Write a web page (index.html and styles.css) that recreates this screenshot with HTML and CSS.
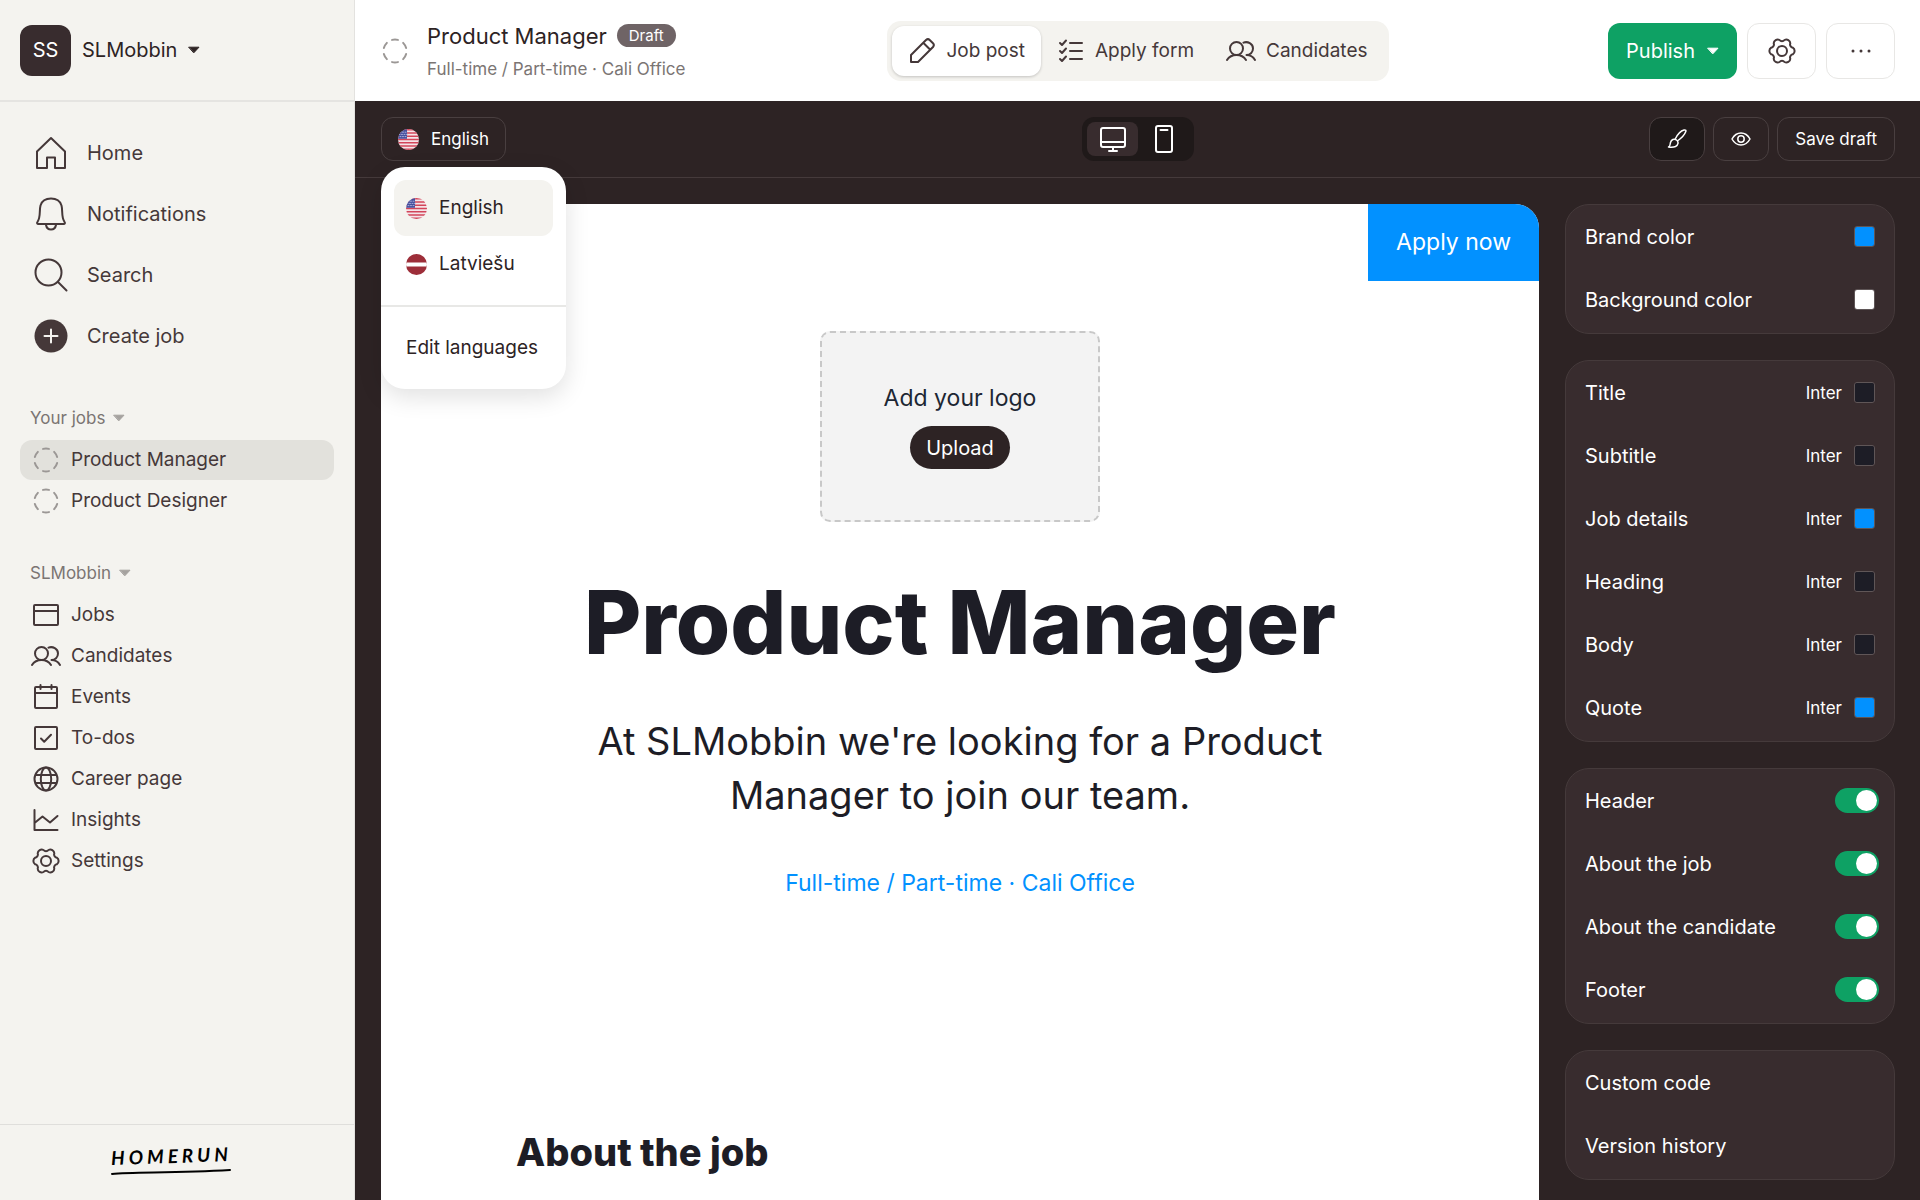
FILE: index.html
```html
<!DOCTYPE html>
<html lang="en">
  <head>
    <meta charset="UTF-8" />
    <meta name="viewport" content="width=device-width, initial-scale=1.0" />
    <title>Product Manager - Homerun</title>
    <link rel="stylesheet" href="styles.css">
  </head>
  <body>
    <!-- shared icons -->
    <svg class="sprite" aria-hidden="true">
      <symbol id="draft" viewBox="0 0 26 26">
        <circle cx="13" cy="13" r="11.5" pathLength="60" stroke-dasharray="5 5" stroke-dashoffset="-2.5" />
      </symbol>
      <symbol id="caret" viewBox="0 0 12 8">
        <path d="M1 1.2h10L6 6.6z" fill="currentColor" stroke-width="1" />
      </symbol>
      <symbol id="people" viewBox="0 0 30 20">
        <circle cx="10.5" cy="7.5" r="6.5" />
        <path d="M1 19c2.2-3.5 5.5-5 9.5-5s7.3 1.5 9.5 5M17.5 1.6c4.2-1.5 9.5 1 9.5 5.9 0 3.9-3 6.5-6.5 6.5 3.5 0 6.5 1.5 8.5 5" />
      </symbol>
      <symbol id="gear" viewBox="0 0 28 28">
        <path d="M24.8 10.7A3.9 3.9 0 0 1 24.8 17.3A3.2 3.2 0 0 0 22.3 21.7A3.9 3.9 0 0 1 16.5 25A3.2 3.2 0 0 0 11.5 25A3.9 3.9 0 0 1 5.7 21.7A3.2 3.2 0 0 0 3.2 17.3A3.9 3.9 0 0 1 3.2 10.7A3.2 3.2 0 0 0 5.7 6.3A3.9 3.9 0 0 1 11.5 3A3.2 3.2 0 0 0 16.5 3A3.9 3.9 0 0 1 22.3 6.3A3.2 3.2 0 0 0 24.8 10.7z" />
        <circle cx="14" cy="14" r="5" />
      </symbol>
      <symbol id="flag-us" viewBox="0 0 21 21">
        <clipPath id="round"><circle cx="10.5" cy="10.5" r="10.5" /></clipPath>
        <g clip-path="url(#round)" stroke="none">
          <path fill="#f4e4e8" d="M0 0h21v21H0z" />
          <path fill="#d2455a" d="M0 0h21v1.6H0zM0 3.2h21v1.6H0zM0 6.5h21v1.6H0zM0 9.7h21v1.6H0zM0 12.9h21v1.6H0zM0 16.2h21v1.6H0zM0 19.4h21v1.6H0z" />
          <path fill="#464f9e" d="M0 0h9v9.7H0z" />
          <path stroke="#a9aed6" stroke-width="1" stroke-dasharray="1 1.5" d="M2 3.2h7M1 5.4h8M2 7.6h7" />
        </g>
      </symbol>
      <symbol id="flag-lv" viewBox="0 0 21 21">
        <g clip-path="url(#round)" stroke="none">
          <path fill="#9d2e39" d="M0 0h21v21H0z" />
          <path fill="#fff" d="M0 8.4h21v4.2H0z" />
        </g>
      </symbol>
    </svg>

    <div class="app">
      <aside class="sidebar">
        <button class="account">
          <span class="avatar">SS</span>
          <span>SLMobbin</span>
          <svg class="icon caret"><use href="#caret" /></svg>
        </button>

        <nav class="main-nav">
          <a href="#">
            <svg class="icon icon-lg" viewBox="0 0 34 34"><path d="M3 32V15.500L17 2l14 13.500V32H21V21.500h-8V32z" /></svg>
            Home
          </a>
          <a href="#">
            <svg class="icon icon-lg" viewBox="0 0 34 34"><path d="M4.500 27c-1.500 0-1.800-1.200-1-2.200C7 20 5 14 6.500 8.500 8 3.500 12 1.500 17 1.500s9 2 10.500 7C29 14 27 20 30.500 24.800c.8 1 .5 2.200-1 2.200zM12 28c.5 2.700 2.500 4.500 5 4.500s4.500-1.800 5-4.500" /></svg>
            Notifications
          </a>
          <a href="#">
            <svg class="icon icon-lg" viewBox="0 0 34 34"><circle cx="14.500" cy="14.500" r="13" /><path d="M24 24l8.500 8.500" /></svg>
            Search
          </a>
          <a href="#">
            <svg class="icon icon-lg" viewBox="0 0 34 34"><circle cx="17" cy="17" r="16.500" fill="#453839" stroke="none" /><path d="M17 10.500v13M10.500 17h13" stroke="#f4f3ef" /></svg>
            Create job
          </a>
        </nav>

        <nav class="side-group">
          <button class="group-title">Your jobs <svg class="icon caret"><use href="#caret" /></svg></button>
          <a class="active" href="#"><svg class="icon draft"><use href="#draft" /></svg>Product Manager</a>
          <a href="#"><svg class="icon draft"><use href="#draft" /></svg>Product Designer</a>
        </nav>

        <nav class="side-group">
          <button class="group-title">SLMobbin <svg class="icon caret"><use href="#caret" /></svg></button>
          <a href="#"><svg class="icon" viewBox="0 0 28 28"><rect x="2" y="4" width="24" height="20" rx="1" /><path d="M2 10h24" /></svg>Jobs</a>
          <a href="#"><svg class="icon people"><use href="#people" /></svg>Candidates</a>
          <a href="#"><svg class="icon" viewBox="0 0 28 28"><rect x="3" y="4" width="22" height="21" rx="1" /><path d="M3 10h22M8.500 2v4M19.500 2v4" /></svg>Events</a>
          <a href="#"><svg class="icon" viewBox="0 0 28 28"><rect x="3" y="3" width="22" height="22" rx="1" /><path d="M9 14.500l3.200 3.200 6.800-7" /></svg>To-dos</a>
          <a href="#"><svg class="icon" viewBox="0 0 28 28"><circle cx="14" cy="14" r="11.500" /><ellipse cx="14" cy="14" rx="5.200" ry="11.500" /><path d="M4 10h20M4 18h20" /></svg>Career page</a>
          <a href="#"><svg class="icon" viewBox="0 0 28 28"><path d="M2.500 4v20h23M2.500 17l8-6.500 7.500 6 7.500-6.500" /></svg>Insights</a>
          <a href="#"><svg class="icon"><use href="#gear" /></svg>Settings</a>
        </nav>

        <div class="brand">
          <span class="brand-name">HOMERUN</span>
          <svg class="brand-line" viewBox="0 0 120 6"><path d="M1 5c20-2.500 60-.5 118-4" /></svg>
        </div>
      </aside>

      <div class="content">
        <header class="header">
          <div class="job">
            <svg class="icon draft"><use href="#draft" /></svg>
            <div>
              <div class="job-name">Product Manager <span class="badge">Draft</span></div>
              <div class="job-info">Full-time / Part-time · Cali Office</div>
            </div>
          </div>

          <nav class="tabs">
            <a class="active" href="#">
              <svg class="icon" viewBox="0 0 28 28"><path d="M3 25v-7L18 3c1.400-1.200 2.500-1.200 3.700 0L25 6.300c1.200 1.200 1.200 2.300 0 3.700L10 25zM15.500 6l6.500 6.500" /></svg>
              Job post
            </a>
            <a href="#">
              <svg class="icon" viewBox="0 0 28 28"><path d="M13 6h12M13 14h12M13 22h12M3 6l2 2 4-4.500M3 14l2 2 4-4.500M3 22l2 2 4-4.500" /></svg>
              Apply form
            </a>
            <a href="#"><svg class="icon people"><use href="#people" /></svg>Candidates</a>
          </nav>

          <div class="actions">
            <button class="publish">Publish <svg class="icon caret"><use href="#caret" /></svg></button>
            <button class="square" aria-label="Settings"><svg class="icon"><use href="#gear" /></svg></button>
            <button class="square" aria-label="More">
              <svg class="icon" viewBox="0 0 28 28"><g fill="currentColor" stroke="none"><circle cx="6" cy="14" r="1.500" /><circle cx="14" cy="14" r="1.500" /><circle cx="22" cy="14" r="1.500" /></g></svg>
            </button>
          </div>
        </header>

        <div class="toolbar">
          <div class="language">
            <button class="tool"><svg class="flag"><use href="#flag-us" /></svg>English</button>
            <div class="menu">
              <div class="menu-group">
                <button class="active"><svg class="flag"><use href="#flag-us" /></svg>English</button>
                <button><svg class="flag"><use href="#flag-lv" /></svg>Latviešu</button>
              </div>
              <div class="menu-group">
                <button>Edit languages</button>
              </div>
            </div>
          </div>

          <div class="devices">
            <button class="active" aria-label="Desktop">
              <svg class="icon" viewBox="0 0 28 28"><rect x="2" y="3" width="24" height="19" rx="2" /><path d="M2 17h24M14 22v4M10 26h8" /></svg>
            </button>
            <button aria-label="Mobile">
              <svg class="icon" viewBox="0 0 28 28"><rect x="6" y="1" width="16" height="26" rx="2" /><path d="M10.500 5h7" /></svg>
            </button>
          </div>

          <div class="tools">
            <button class="tool dark" aria-label="Design">
              <svg class="icon-sm" viewBox="0 0 20 20"><path d="M8.500 9.500c2-4 5-7.500 8.500-8.500 1.800-.4 2.200.6 1.700 1.800C17.500 6 14.500 9 11 11.500M1.500 18c1.800-.5 1.500-2.500 2-4.500.8-3 3.500-4.300 6-2.500 2.500 2 1.800 5-1 6.500-2 .9-4.500.8-7 .5z" /></svg>
            </button>
            <button class="tool" aria-label="Preview">
              <svg class="icon-sm" viewBox="0 0 20 20"><path d="M1 10c2.200-4 5.300-6 9-6s6.800 2 9 6c-2.200 4-5.300 6-9 6s-6.800-2-9-6z" /><circle cx="10" cy="10" r="3.200" /></svg>
            </button>
            <button class="tool">Save draft</button>
          </div>
        </div>

        <div class="workspace">
          <main class="page">
            <button class="apply">Apply now</button>
            <div class="logo-box">
              <span>Add your logo</span>
              <button class="upload">Upload</button>
            </div>
            <h1>Product Manager</h1>
            <p class="subtitle">At SLMobbin we're looking for a Product Manager to join our team.</p>
            <p class="details">Full-time / Part-time · Cali Office</p>
            <h2>About the job</h2>
          </main>

          <aside class="panel">
            <div class="card">
              <div class="row"><label for="brand">Brand color</label><input type="color" id="brand" value="#0291ff" /></div>
              <div class="row"><label for="background">Background color</label><input type="color" id="background" value="#ffffff" /></div>
            </div>
            <div class="card">
              <div class="row"><label for="title">Title</label><button class="font">Inter</button><input type="color" id="title" value="#1d1d26" /></div>
              <div class="row"><label for="subtitle">Subtitle</label><button class="font">Inter</button><input type="color" id="subtitle" value="#1d1d26" /></div>
              <div class="row"><label for="details">Job details</label><button class="font">Inter</button><input type="color" id="details" value="#0291ff" /></div>
              <div class="row"><label for="heading">Heading</label><button class="font">Inter</button><input type="color" id="heading" value="#1d1d26" /></div>
              <div class="row"><label for="body">Body</label><button class="font">Inter</button><input type="color" id="body" value="#1d1d26" /></div>
              <div class="row"><label for="quote">Quote</label><button class="font">Inter</button><input type="color" id="quote" value="#0291ff" /></div>
            </div>
            <div class="card">
              <div class="row"><label for="show-header">Header</label><input type="checkbox" id="show-header" checked /></div>
              <div class="row"><label for="show-job">About the job</label><input type="checkbox" id="show-job" checked /></div>
              <div class="row"><label for="show-candidate">About the candidate</label><input type="checkbox" id="show-candidate" checked /></div>
              <div class="row"><label for="show-footer">Footer</label><input type="checkbox" id="show-footer" checked /></div>
            </div>
            <div class="card">
              <button class="row">Custom code</button>
              <button class="row">Version history</button>
            </div>
          </aside>
        </div>
      </div>
    </div>
  </body>
</html>
```

FILE: styles.css
```css
* {
  box-sizing: border-box;
}
body {
  margin: 0;
  font-family: Inter, "Liberation Sans", sans-serif;
  font-size: 20px;
  line-height: 28px;
  color: #453839;
}
a {
  color: inherit;
  text-decoration: none;
}
button {
  padding: 0;
  border: none;
  background: none;
  font: inherit;
  color: inherit;
  cursor: pointer;
}
h1,
h2,
p {
  margin: 0;
}
.sprite {
  position: absolute;
  width: 0;
  height: 0;
}

/* icons */
svg {
  flex-shrink: 0;
  fill: none;
  stroke: currentColor;
  stroke-linecap: round;
  stroke-linejoin: round;
}
.icon {
  width: 28px;
  height: 28px;
  stroke-width: 2;
}
.icon-lg {
  width: 34px;
  height: 34px;
}
.icon-sm {
  width: 20px;
  height: 20px;
  stroke-width: 1.5;
}
.icon.draft {
  width: 26px;
  height: 26px;
  margin: 0 1px;
  color: #9b9795;
}
.icon.people {
  width: 30px;
  height: 20px;
}
.icon.caret {
  width: 12px;
  height: 8px;
}
.flag {
  width: 21px;
  height: 21px;
}

.app {
  display: flex;
  height: 100vh;
  overflow: hidden;
}

/* sidebar */
.sidebar {
  display: flex;
  flex-direction: column;
  width: 355px;
  flex-shrink: 0;
  background-color: #f4f3ef;
  border-right: 1px solid #e3e2df;
}
.account {
  display: flex;
  align-items: center;
  gap: 11px;
  height: 102px;
  padding: 0 20px;
  border-bottom: 2px solid #e5e4e1;
  color: #2d2324;
}
.avatar {
  width: 51px;
  height: 51px;
  border-radius: 12px;
  background-color: #382c2e;
  color: #fff;
  line-height: 51px;
}
.main-nav {
  padding: 20px 20px 0;
}
.main-nav a {
  display: flex;
  align-items: center;
  gap: 19px;
  height: 61px;
  padding: 0 14px;
}
.side-group {
  display: flex;
  flex-direction: column;
  gap: 1px;
  padding: 0 20px;
  margin-top: 36px;
  font-size: 19px;
}
.group-title {
  display: flex;
  align-items: center;
  gap: 8px;
  height: 32px;
  padding: 0 10px;
  margin-bottom: 5px;
  font-size: 17px;
  color: #7b7573;
}
.group-title .caret {
  color: #a5a29f;
}
.side-group a {
  display: flex;
  align-items: center;
  gap: 11px;
  height: 40px;
  padding: 0 12px;
  border-radius: 12px;
}
.side-group a.active {
  background-color: #e2e1dc;
}
.side-group a .people {
  margin: 0 -1px;
}
.brand {
  display: flex;
  flex-direction: column;
  align-items: center;
  height: 76px;
  margin-top: auto;
  padding: 18px 12px 0 0;
  border-top: 1px solid #dfdedb;
  color: #000;
}
.brand-name {
  font-family: Lato, sans-serif;
  font-size: 19px;
  font-style: italic;
  font-weight: 700;
  line-height: 26px;
  letter-spacing: 4px;
  transform: rotate(-2deg);
}
.brand-line {
  width: 120px;
  height: 6px;
  stroke-width: 2;
}

/* header */
.content {
  display: flex;
  flex-direction: column;
  flex: 1;
  min-width: 0;
  background-color: #2d2324;
}
.header,
.toolbar {
  display: grid;
  grid-template-columns: 1fr auto 1fr;
  align-items: center;
  flex-shrink: 0;
  padding: 0 25px 0 26px;
}
.header {
  height: 101px;
  background-color: #fff;
}
.job {
  display: flex;
  align-items: center;
  gap: 18px;
}
.job-name {
  display: flex;
  align-items: center;
  gap: 10px;
  font-size: 22px;
  line-height: 34px;
  color: #2d2324;
}
.badge {
  padding: 0 12px;
  border-radius: 12px;
  background-color: #6f6466;
  color: #fff;
  font-size: 15px;
  line-height: 23px;
}
.job-info {
  margin-top: 2px;
  font-size: 17px;
  color: #7b7573;
}
.tabs {
  display: flex;
  padding: 5px;
  border-radius: 14px;
  background-color: #f4f3ef;
  font-size: 19px;
}
.tabs a {
  display: flex;
  align-items: center;
  gap: 10px;
  height: 50px;
  padding: 0 16px;
  border-radius: 12px;
}
.tabs a.active {
  background-color: #fff;
  box-shadow: 0 1px 3px rgba(0, 0, 0, 0.2);
}
.actions {
  display: flex;
  justify-content: flex-end;
  gap: 10px;
}
.publish {
  display: flex;
  align-items: center;
  gap: 12px;
  height: 56px;
  padding: 0 18px;
  border-radius: 12px;
  background-color: #0ea164;
  color: #fff;
}
.square {
  display: flex;
  align-items: center;
  justify-content: center;
  width: 69px;
  height: 56px;
  border: 1px solid #e8e7e5;
  border-radius: 12px;
}

/* toolbar */
.toolbar {
  height: 77px;
  border-bottom: 1px solid #453a3b;
  color: #fff;
}
.language {
  position: relative;
}
.tool {
  display: flex;
  align-items: center;
  gap: 12px;
  height: 44px;
  padding: 0 16px;
  border: 1px solid #493f40;
  border-radius: 12px;
  font-size: 17px;
}
.tool.dark {
  background-color: #1f1919;
}
.tools {
  display: flex;
  justify-content: flex-end;
  gap: 8px;
}
.tools .tool {
  padding: 0 17px;
}
.devices {
  display: flex;
  padding: 5px;
  border-radius: 12px;
  background-color: #1f1919;
}
.devices button {
  display: flex;
  align-items: center;
  justify-content: center;
  width: 51px;
  height: 34px;
  border-radius: 8px;
}
.devices button.active {
  background-color: #382c2e;
}
.menu {
  position: absolute;
  top: 50px;
  left: 0;
  z-index: 1;
  min-width: 185px;
  border-radius: 24px;
  background-color: #fff;
  box-shadow: 0 8px 24px rgba(0, 0, 0, 0.12);
  color: #2d2324;
  font-size: 19px;
}
.menu-group {
  padding: 13px;
}
.menu-group + .menu-group {
  border-top: 2px solid #e8e8e6;
}
.menu button {
  display: flex;
  align-items: center;
  gap: 12px;
  width: 100%;
  height: 56px;
  padding: 0 12px;
  border-radius: 12px;
  white-space: nowrap;
}
.menu button.active {
  background-color: #f4f3ef;
}

/* job page preview */
.workspace {
  display: flex;
  flex: 1;
  gap: 26px;
  min-height: 0;
  padding: 26px 25px 0 26px;
}
.page {
  position: relative;
  flex: 1;
  padding: 127px 135px 0;
  border-top-right-radius: 24px;
  background-color: #fff;
  color: #1d1d26;
  text-align: center;
}
.apply {
  position: absolute;
  top: 0;
  right: 0;
  padding: 24px 28px 25px;
  border-top-right-radius: 24px;
  background-color: #0291ff;
  color: #fff;
  font-size: 23px;
}
.logo-box {
  display: flex;
  flex-direction: column;
  align-items: center;
  justify-content: center;
  gap: 14px;
  width: 280px;
  height: 191px;
  margin: 0 auto 50px;
  border: 2px dashed #c8c8c8;
  border-radius: 10px;
  background-color: #f3f3f3;
  color: #1d2733;
  font-size: 23px;
}
.upload {
  height: 43px;
  padding: 0 16px;
  border-radius: 22px;
  background-color: #2d2324;
  color: #fff;
  font-size: 20px;
}
h1 {
  font-size: 88px;
  font-weight: 800;
  line-height: 100px;
}
.subtitle {
  max-width: 800px;
  margin: 42px auto 46px;
  font-size: 38px;
  line-height: 54px;
}
.details {
  color: #0291ff;
  font-size: 23px;
  line-height: 30px;
}
h2 {
  margin-top: 227px;
  font-size: 38px;
  font-weight: 800;
  line-height: 54px;
  text-align: left;
}

/* design panel */
.panel {
  display: flex;
  flex-direction: column;
  gap: 26px;
  width: 330px;
  flex-shrink: 0;
  color: #fff;
}
.card {
  padding-bottom: 2px;
  border: 1px solid #453a3b;
  border-radius: 24px;
  background-color: #382c2e;
}
.row {
  display: flex;
  align-items: center;
  gap: 12px;
  width: 100%;
  height: 63px;
  padding: 0 19px;
}
.row label {
  flex: 1;
}
.font {
  font-size: 17px;
}
input[type="color"] {
  appearance: none;
  width: 21px;
  height: 21px;
  padding: 0;
  border: 1px solid rgba(255, 255, 255, 0.2);
  border-radius: 3px;
  background: none;
  overflow: hidden;
}
input[type="color"]::-webkit-color-swatch-wrapper {
  padding: 0;
}
input[type="color"]::-webkit-color-swatch {
  border: none;
}
input[type="checkbox"] {
  appearance: none;
  display: flex;
  justify-content: flex-end;
  width: 44px;
  height: 25px;
  margin: 0 -4px 0 0;
  padding: 2px;
  border-radius: 13px;
  background-color: #0ea164;
}
input[type="checkbox"]::before {
  content: "";
  width: 21px;
  height: 21px;
  border-radius: 50%;
  background-color: #fff;
}
```
